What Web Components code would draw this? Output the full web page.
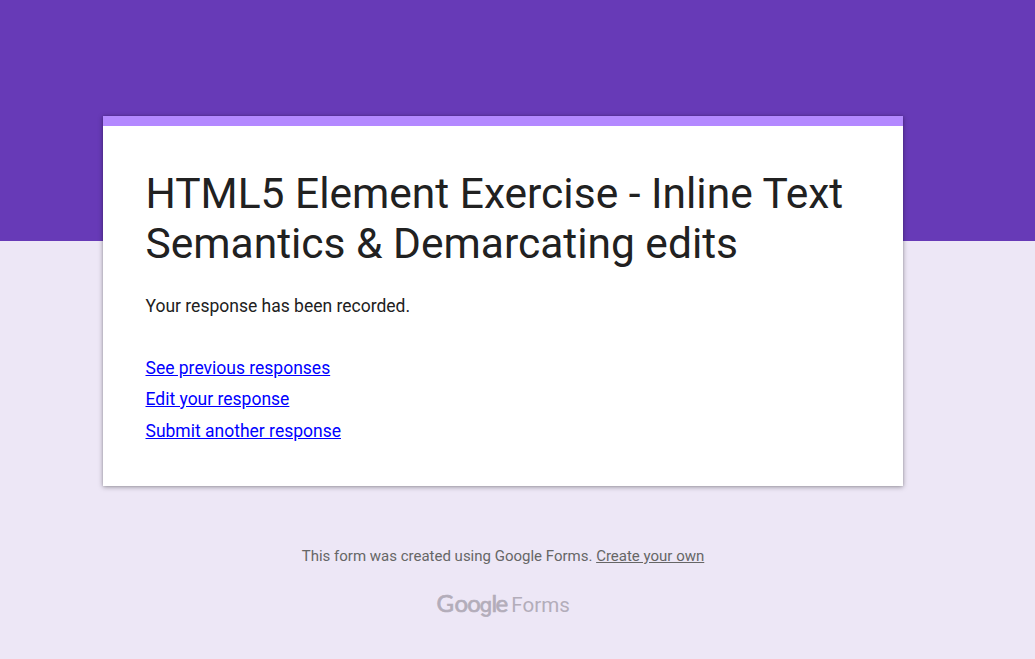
<!DOCTYPE html>
<html lang="en">
<head>
<meta charset="utf-8">
<title>Form response recorded</title>
<style>
html, body { margin: 0; height: 100%; }
body { background: #ede7f6; font-family: Roboto, Arial, sans-serif; overflow: hidden; }
</style>
</head>
<body>
<form-page>
  <response-card>
    <span slot="title">HTML5 Element Exercise - Inline Text Semantics &amp; Demarcating edits</span>
    <span slot="message">Your response has been recorded.</span>
    <action-link>See previous responses</action-link>
    <action-link>Edit your response</action-link>
    <action-link>Submit another response</action-link>
  </response-card>
  <form-footer></form-footer>
</form-page>
<script>
const define = (name, html) => customElements.define(name, class extends HTMLElement {
  constructor() {
    super();
    this.attachShadow({ mode: 'open' }).innerHTML = html;
  }
});

define('form-page', `
<style>
:host { display: block; box-sizing: border-box; height: 659px; padding: 116px 29px 0 0;
  background: linear-gradient(#673ab7 0 241px, #ede7f6 241px); }
main { display: flex; flex-direction: column; align-items: center; }
</style>
<main><slot></slot></main>`);

define('response-card', `
<style>
:host { display: block; box-sizing: border-box; width: 800px; height: 370px; background: #fff;
  border-top: 10px solid #b388ff; padding: 43px 42.5px 0;
  box-shadow: 0 1px 5px rgba(0,0,0,.36), 0 0 2px rgba(0,0,0,.12); }
h1 { margin: 0; font-size: 42.5px; line-height: 50px; font-weight: 400; color: #212121; }
p { margin: 24px 0 0; font-size: 17.5px; line-height: 27px; color: #212121; }
nav { display: flex; flex-direction: column; align-items: flex-start; margin-top: 32.5px; }
</style>
<h1><slot name="title"></slot></h1>
<p><slot name="message"></slot></p>
<nav><slot></slot></nav>`);

define('action-link', `
<style>
:host { display: block; font-size: 17.5px; line-height: 31.5px; }
a { color: #0000ff; text-decoration: underline; }
</style>
<a href="#"><slot></slot></a>`);

define('forms-logo', `
<style>
:host { display: block; height: 36px; }
svg { display: block; }
text { fill: #b3adba; font-family: Lato, sans-serif; }
.brand { font-size: 24px; font-weight: 400; stroke: #b3adba; stroke-width: .7px; }
.round { font-family: Inter, sans-serif; font-size: 20px; }
.product { font-family: Roboto, sans-serif; font-size: 21px; font-weight: 400; }
</style>
<svg width="134" height="36" viewBox="0 0 134 36">
  <text class="brand" y="25.4"><tspan x="0.4 18.6 31.2">Goo</tspan><tspan class="round" x="43.8">g</tspan><tspan x="55.6 59.4">le</tspan></text>
  <text class="product" x="75.3" y="25.3" textLength="58.5" lengthAdjust="spacingAndGlyphs">Forms</text>
</svg>`);

define('form-footer', `
<style>
:host { display: flex; flex-direction: column; align-items: center; margin-top: 60px; }
p { margin: 0 0 21px; font-size: 15px; line-height: 20px; color: #666; }
a { color: inherit; }
</style>
<p>This form was created using Google Forms. <a href="#">Create your own</a></p>
<forms-logo></forms-logo>`);
</script>
</body>
</html>
